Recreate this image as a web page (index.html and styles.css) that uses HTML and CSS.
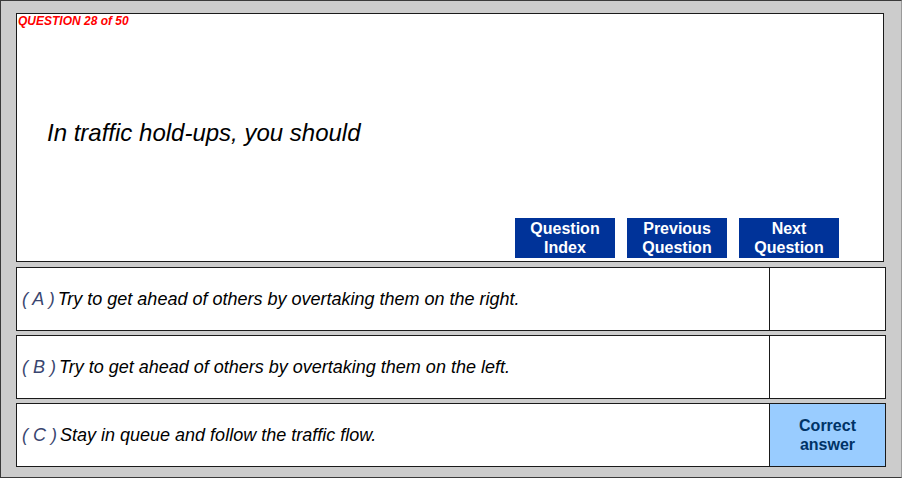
FILE: index.html
```html
<!DOCTYPE html>
<html lang="en">
<head>
    <meta charset="UTF-8">
    <title>Question 28 of 50</title>
    <link rel="stylesheet" href="styles.css">
</head>
<body>
    <div class="frame">
        <div class="question-box">
            <div class="counter">QUESTION 28 of 50</div>
            <div class="question">In traffic hold-ups, you should</div>
            <div class="nav">
                <a class="nav-btn" href="#">Question<br>Index</a>
                <a class="nav-btn" href="#">Previous<br>Question</a>
                <a class="nav-btn" href="#">Next<br>Question</a>
            </div>
        </div>

        <div class="answers">
            <div class="answer">
                <div class="answer-text"><span class="letter">( A )</span> Try to get ahead of others by overtaking them on the right.</div>
                <div class="answer-mark"></div>
            </div>
            <div class="answer">
                <div class="answer-text"><span class="letter">( B )</span> Try to get ahead of others by overtaking them on the left.</div>
                <div class="answer-mark"></div>
            </div>
            <div class="answer">
                <div class="answer-text"><span class="letter">( C )</span> Stay in queue and follow the traffic flow.</div>
                <div class="answer-mark correct">Correct<br>answer</div>
            </div>
        </div>
    </div>
</body>
</html>
```

FILE: styles.css
```css
body {
    margin: 0;
    background-color: #ffffff;
    font-family: 'Liberation Sans', Arial, sans-serif;
}
.frame {
    box-sizing: border-box;
    width: 902px;
    height: 478px;
    padding: 12px 0 10px 15px;
    background-color: #cccccc;
    border: 1px solid #3a3a3a;
    border-right-color: #9a9a9a;
}
.question-box {
    box-sizing: border-box;
    width: 868px;
    height: 249px;
    display: flex;
    flex-direction: column;
    background-color: #ffffff;
    border: 1px solid #1a1a1a;
}
.counter {
    padding-left: 1px;
    font-size: 12px;
    line-height: 14px;
    font-weight: bold;
    font-style: italic;
    color: #ff0000;
}
.question {
    margin-top: 91px;
    padding-left: 30px;
    font-size: 24px;
    line-height: 28px;
    font-style: italic;
    color: #000000;
}
.nav {
    margin-top: auto;
    display: flex;
    justify-content: flex-end;
    gap: 12px;
    padding: 0 44px 3px 0;
}
.nav-btn {
    width: 100px;
    height: 40px;
    box-sizing: border-box;
    padding-top: 1px;
    background-color: #003399;
    color: #ffffff;
    font-size: 16px;
    line-height: 19px;
    font-weight: bold;
    text-align: center;
    text-decoration: none;
}
.answers {
    display: flex;
    flex-direction: column;
    gap: 4px;
    margin-top: 5px;
}
.answer {
    box-sizing: border-box;
    width: 870px;
    height: 64px;
    display: flex;
    background-color: #ffffff;
    border: 1px solid #1a1a1a;
}
.answer-text {
    flex: 1;
    display: flex;
    align-items: center;
    gap: 3px;
    padding-left: 5px;
    font-size: 18px;
    font-style: italic;
    color: #000000;
}
.letter {
    color: #3a4670;
}
.answer-mark {
    width: 115px;
    border-left: 1px solid #1a1a1a;
}
.answer-mark.correct {
    display: flex;
    align-items: center;
    justify-content: center;
    text-align: center;
    background-color: #99ccff;
    color: #003366;
    font-size: 16px;
    line-height: 19px;
    font-weight: bold;
}
```
